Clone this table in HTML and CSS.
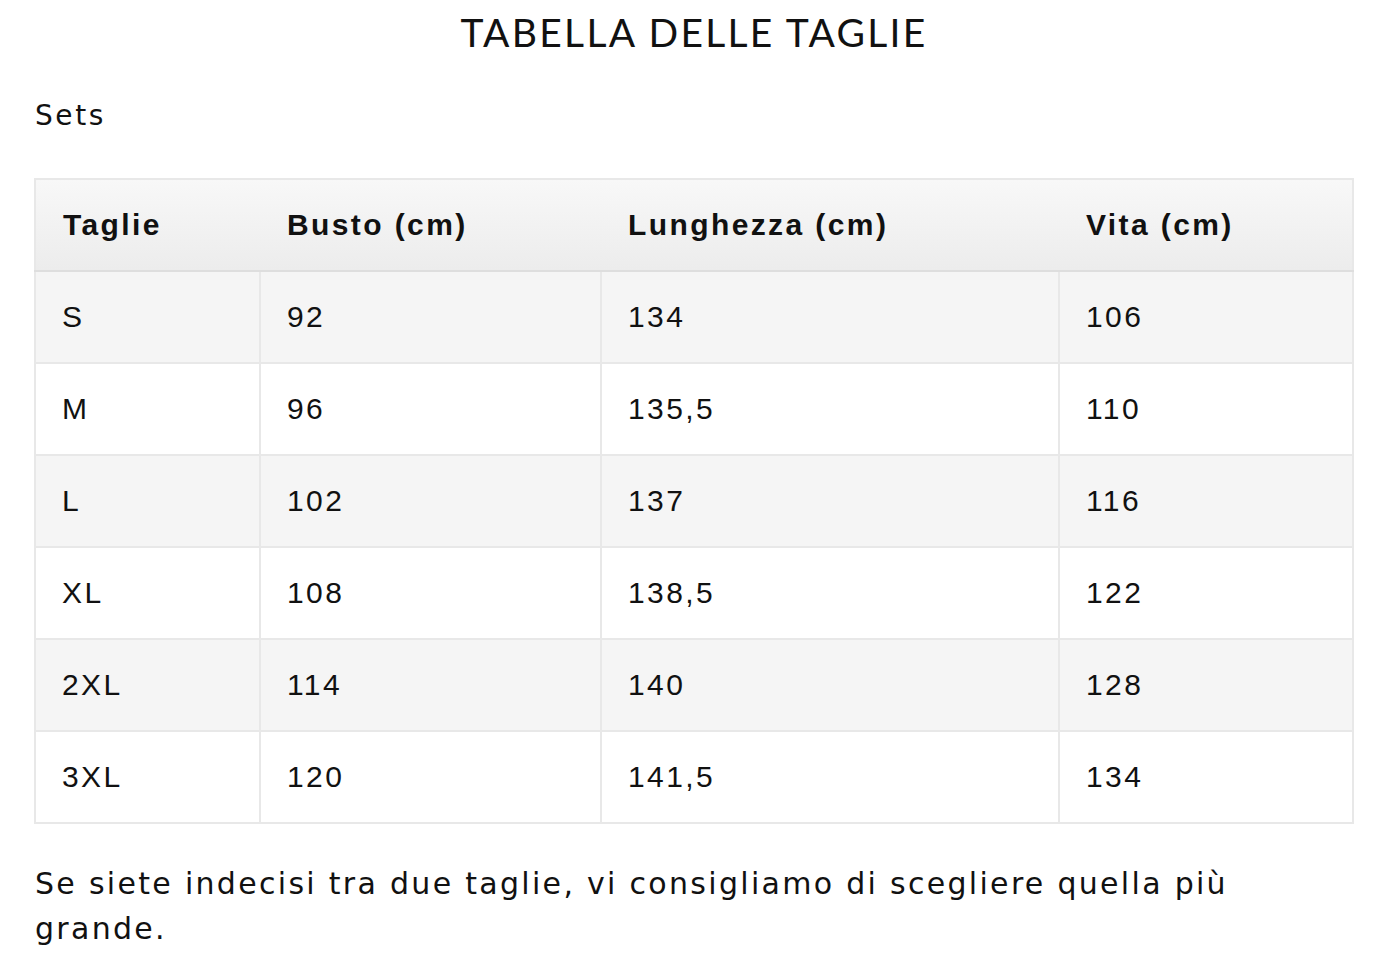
FILE: index.html
```html
<!DOCTYPE html>
<html lang="it">
<head>
<meta charset="utf-8">
<title>Tabella delle taglie</title>
<link rel="stylesheet" href="styles.css">
</head>
<body>
<main class="page">
  <h1 class="title">TABELLA DELLE TAGLIE</h1>
  <p class="subtitle">Sets</p>
  <table class="sizes">
    <thead>
      <tr><th class="c1">Taglie</th><th class="c2">Busto (cm)</th><th class="c3">Lunghezza (cm)</th><th class="c4">Vita (cm)</th></tr>
    </thead>
    <tbody>
      <tr><td>S</td><td>92</td><td>134</td><td>106</td></tr>
      <tr><td>M</td><td>96</td><td>135,5</td><td>110</td></tr>
      <tr><td>L</td><td>102</td><td>137</td><td>116</td></tr>
      <tr><td>XL</td><td>108</td><td>138,5</td><td>122</td></tr>
      <tr><td>2XL</td><td>114</td><td>140</td><td>128</td></tr>
      <tr><td>3XL</td><td>120</td><td>141,5</td><td>134</td></tr>
    </tbody>
  </table>
  <p class="note">Se siete indecisi tra due taglie, vi consigliamo di scegliere quella più grande.</p>
</main>
</body>
</html>
```
FILE: styles.css
```css
html, body {
  margin: 0;
  padding: 0;
  background: #fff;
}
.page {
  padding: 0 36px 0 34px;
  font-family: "DejaVu Sans", "Liberation Sans", sans-serif;
  color: #111;
}
.title {
  margin: 0;
  padding-top: 8px;
  height: 48px;
  text-align: center;
  font-family: "Lato", "Liberation Sans", sans-serif;
  font-weight: 400;
  font-size: 39px;
  line-height: 48px;
  letter-spacing: 2.3px;
}
.subtitle {
  margin: 0;
  padding-top: 42px;
  padding-left: 1px;
  font-size: 28px;
  line-height: 36px;
  letter-spacing: 2.6px;
}
.sizes {
  margin-top: 44px;
  width: 100%;
  border-collapse: collapse;
  border: 2px solid #e8e8e8;
  font-family: "Liberation Sans", Arial, sans-serif;
  font-size: 30px;
  letter-spacing: 2.4px;
  color: #111;
}
.sizes th {
  height: 90px;
  padding: 0 0 0 27px;
  text-align: left;
  font-weight: 700;
  background: linear-gradient(#f8f8f8, #ececec);
  border-bottom: 2px solid #dedede;
}
.sizes td {
  height: 90px;
  padding: 0 0 0 26px;
  border: 2px solid #e8e8e8;
}
.sizes tbody tr:nth-child(odd) td {
  background: #f5f5f5;
}
.sizes .c1 { width: 197px; }
.sizes .c2 { width: 314px; }
.sizes .c3 { width: 431px; }
.note {
  margin: 0;
  padding-top: 37px;
  padding-left: 1px;
  max-width: 1270px;
  font-size: 30px;
  line-height: 45px;
  letter-spacing: 2.3px;
}
```
